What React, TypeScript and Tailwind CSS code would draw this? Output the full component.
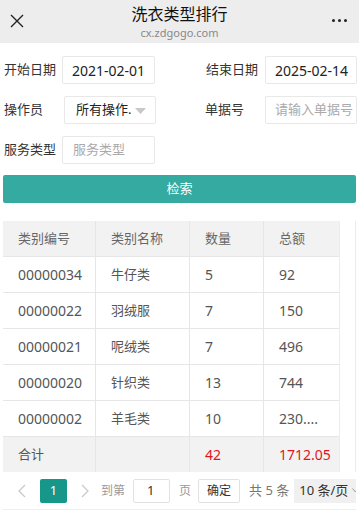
import React from "react";

const rows = [
  ["00000034", "牛仔类", "5", "92"],
  ["00000022", "羽绒服", "7", "150"],
  ["00000021", "呢绒类", "7", "496"],
  ["00000020", "针织类", "13", "744"],
  ["00000002", "羊毛类", "10", "230...."],
];

const font = { fontFamily: '"Noto Sans", "Noto Sans CJK SC", sans-serif' };

function Cell({ children, w, last, className = "" }: { children?: React.ReactNode; w: string; last?: boolean; className?: string }) {
  return (
    <div className={`${w} h-full flex items-center pl-[15px] shrink-0 ${last ? "" : "border-r border-[#e6e6e6]"} ${className}`}>
      {children}
    </div>
  );
}

export default function App() {
  return (
    <div className="w-[359px] h-[515px] bg-white overflow-hidden text-[#333]" style={font}>
      {/* header */}
      <div className="h-[43px] bg-[#ededed] relative flex flex-col items-center">
        <div className="text-[16px] leading-[20px] mt-[4px] text-[#111]">洗衣类型排行</div>
        <div className="text-[11px] leading-[14px] mt-[2px] text-[#888]">cx.zdgogo.com</div>
        <svg className="absolute left-[9px] top-[13px]" width="16" height="16" viewBox="0 0 16 16">
          <path d="M2 2 L14 14 M14 2 L2 14" stroke="#222" strokeWidth="1.4" />
        </svg>
        <div className="absolute right-[12px] top-[19px] flex gap-[3px]">
          <span className="w-[3px] h-[3px] rounded-full bg-[#222]" />
          <span className="w-[3px] h-[3px] rounded-full bg-[#222]" />
          <span className="w-[3px] h-[3px] rounded-full bg-[#222]" />
        </div>
      </div>

      {/* form */}
      <div className="mt-[13px] flex flex-col gap-[12px] text-[14px] whitespace-nowrap">
        <div className="flex h-[28px] items-center">
          <div className="w-[180px] shrink-0 flex items-center">
            <span className="w-[62px] shrink-0 pl-[4px] text-[13px] text-[#333]">开始日期</span>
            <div className="w-[93px] shrink-0 h-[28px] border border-[#e8e8e8] rounded-[2px] flex items-center pl-[9px] text-[#222]">2021-02-01</div>
          </div>
          <div className="w-[179px] shrink-0 flex items-center">
            <span className="w-[85px] shrink-0 text-right pr-[7px] text-[13px] text-[#333]">结束日期</span>
            <div className="w-[92px] shrink-0 h-[28px] border border-[#e8e8e8] rounded-[2px] flex items-center pl-[9px] text-[#222]">2025-02-14</div>
          </div>
        </div>
        <div className="flex h-[28px] items-center">
          <div className="w-[180px] shrink-0 flex items-center">
            <span className="w-[64px] shrink-0 pl-[4px] text-[13px] text-[#333]">操作员</span>
            <div className="w-[92px] shrink-0 h-[28px] border border-[#e8e8e8] rounded-[2px] flex items-center pl-[11px] text-[13px] text-[#222] relative">
              所有操作.
              <svg className="absolute right-[9px] top-[11px]" width="11" height="6" viewBox="0 0 11 6">
                <path d="M0 0 L11 0 L5.5 6 Z" fill="#c8c8c8" />
              </svg>
            </div>
          </div>
          <div className="w-[179px] shrink-0 flex items-center">
            <span className="w-[85px] shrink-0 pl-[25px] text-[13px] text-[#333]">单据号</span>
            <div className="w-[92px] shrink-0 h-[28px] border border-[#e8e8e8] rounded-[2px] flex items-center pl-[9px] text-[13px] text-[#aaa] overflow-hidden">请输入单据号</div>
          </div>
        </div>
        <div className="flex h-[28px] items-center">
          <div className="w-[180px] shrink-0 flex items-center">
            <span className="w-[62px] shrink-0 pl-[4px] text-[13px] text-[#333]">服务类型</span>
            <div className="w-[93px] shrink-0 h-[28px] border border-[#e8e8e8] rounded-[2px] flex items-center pl-[10px] text-[13px] text-[#aaa]">服务类型</div>
          </div>
        </div>
      </div>

      {/* button */}
      <div className="px-[3px] mt-[11px]">
        <div className="h-[28px] bg-[#35aaa0] rounded-[2px] flex items-center justify-center text-white text-[13px]">检索</div>
      </div>

      {/* table */}
      <div className="mx-[3px] mt-[18px] border-r border-[#ececec] flex">
        <div className="w-[336px] shrink-0 text-[14px] text-[#555]">
          <div className="h-[36px] flex bg-[#f2f2f2] border-b border-[#e6e6e6] text-[13px] text-[#666]">
            <Cell w="w-[93px]">类别编号</Cell>
            <Cell w="w-[94px]">类别名称</Cell>
            <Cell w="w-[74px]">数量</Cell>
            <Cell w="w-[75px]" last>总额</Cell>
          </div>
          {rows.map((r) => (
            <div key={r[0]} className="h-[36px] flex border-b border-[#e6e6e6]">
              <Cell w="w-[93px]">{r[0]}</Cell>
              <Cell w="w-[94px]" className="text-[13px]">{r[1]}</Cell>
              <Cell w="w-[74px]">{r[2]}</Cell>
              <Cell w="w-[75px]" last>{r[3]}</Cell>
            </div>
          ))}
          <div className="h-[35px] flex bg-[#f2f2f2]">
            <Cell w="w-[93px]" className="text-[13px]">合计</Cell>
            <Cell w="w-[94px]"></Cell>
            <Cell w="w-[74px]" className="text-[#e0161e]">42</Cell>
            <Cell w="w-[75px]" last className="text-[#e0161e]">1712.05</Cell>
          </div>
        </div>
        <div className="flex-1 border-l border-[#ececec]" />
      </div>

      {/* pagination */}
      <div className="mx-[3px] h-[38px] border-b border-[#eeeeee] flex items-center text-[12px] text-[#999] whitespace-nowrap">
        <svg className="ml-[15px] shrink-0" width="8" height="14" viewBox="0 0 8 14">
          <path d="M7 1 L1 7 L7 13" stroke="#c8c8c8" strokeWidth="1.2" fill="none" />
        </svg>
        <div className="ml-[14px] shrink-0 w-[27px] h-[24px] bg-[#17968a] rounded-[2px] flex items-center justify-center text-white text-[13px]">1</div>
        <svg className="ml-[14px] shrink-0" width="8" height="14" viewBox="0 0 8 14">
          <path d="M1 1 L7 7 L1 13" stroke="#c8c8c8" strokeWidth="1.2" fill="none" />
        </svg>
        <span className="ml-[12px] shrink-0 text-[#999]">到第</span>
        <div className="ml-[8px] shrink-0 w-[37px] h-[24px] border border-[#e2e2e2] rounded-[2px] flex items-center pl-[13px] text-[13px] text-[#333]">1</div>
        <span className="ml-[9px] shrink-0 text-[#999]">页</span>
        <div className="ml-[7px] shrink-0 w-[42px] h-[24px] border border-[#e2e2e2] rounded-[2px] flex items-center justify-center text-[12px] text-[#333]">确定</div>
        <span className="ml-[9px] shrink-0 text-[13px] text-[#777]">共 5 条</span>
        <div className="ml-[5px] h-[24px] flex-1 min-w-0 bg-[#f0f0f0] flex items-center pl-[5px] text-[13px] text-[#333] overflow-hidden">
          10 条/页
          <svg className="ml-[4px] shrink-0" width="7" height="5" viewBox="0 0 7 5">
            <path d="M0.5 0.5 L3.5 4 L6.5 0.5" stroke="#999" strokeWidth="1" fill="none" />
          </svg>
        </div>
      </div>
    </div>
  );
}
